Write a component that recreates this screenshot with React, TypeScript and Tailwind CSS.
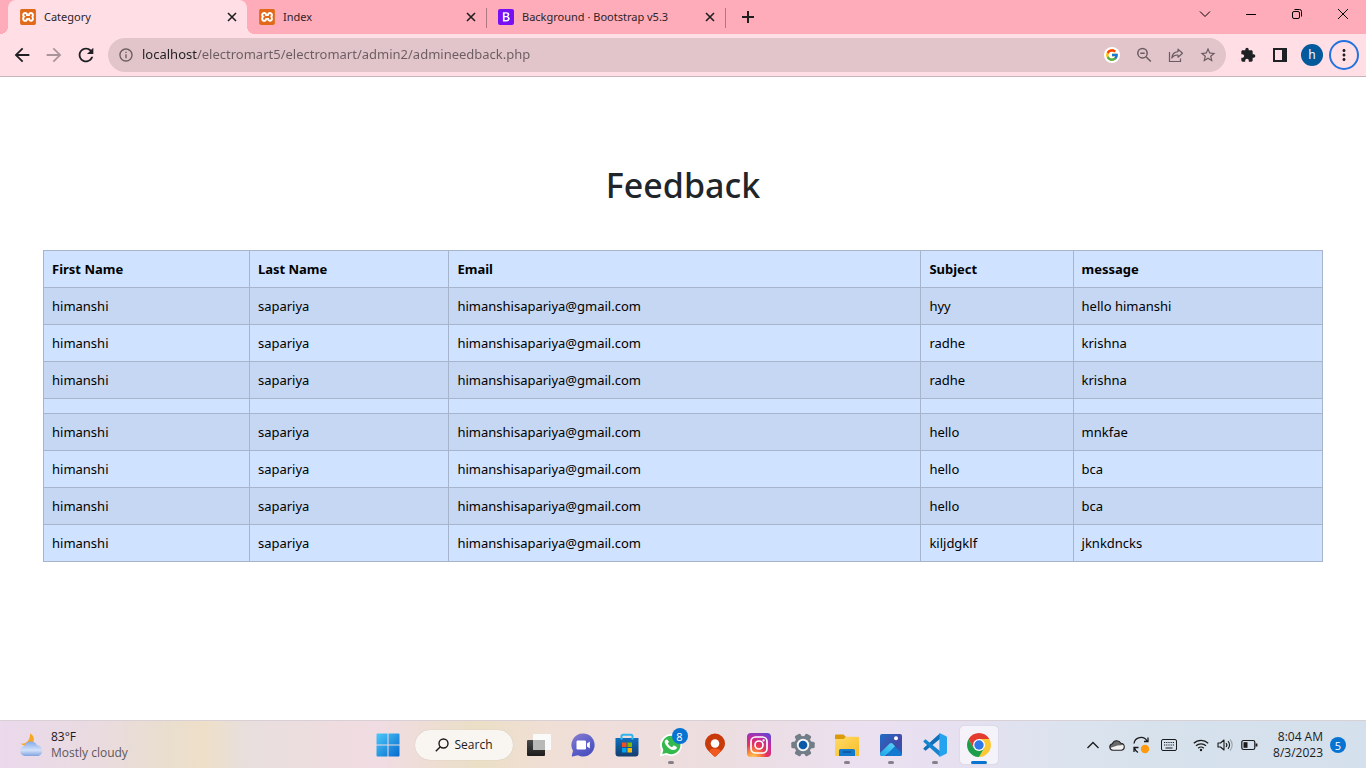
import type { ReactNode } from 'react'
import {
  MdArrowBack,
  MdArrowForward,
  MdExtension,
  MdInfoOutline,
  MdMoreVert,
  MdRefresh,
  MdStarBorder,
} from 'react-icons/md'
import { FcGoogle } from 'react-icons/fc'
import { SiXampp } from 'react-icons/si'

/* ---------- data ---------- */

type Row = [string, string, string, string, string]

const columns: Row = ['First Name', 'Last Name', 'Email', 'Subject', 'message']

const rows: Row[] = [
  ['himanshi', 'sapariya', 'himanshisapariya@gmail.com', 'hyy', 'hello himanshi'],
  ['himanshi', 'sapariya', 'himanshisapariya@gmail.com', 'radhe', 'krishna'],
  ['himanshi', 'sapariya', 'himanshisapariya@gmail.com', 'radhe', 'krishna'],
  ['', '', '', '', ''],
  ['himanshi', 'sapariya', 'himanshisapariya@gmail.com', 'hello', 'mnkfae'],
  ['himanshi', 'sapariya', 'himanshisapariya@gmail.com', 'hello', 'bca'],
  ['himanshi', 'sapariya', 'himanshisapariya@gmail.com', 'hello', 'bca'],
  ['himanshi', 'sapariya', 'himanshisapariya@gmail.com', 'kiljdgklf', 'jknkdncks'],
]

/* ---------- browser chrome ---------- */

function XamppIcon() {
  return (
    <span className="flex size-4 shrink-0 items-center justify-center rounded-[2px] bg-white">
      <SiXampp className="size-4 text-[#e2691a]" />
    </span>
  )
}

function BootstrapIcon() {
  return (
    <svg viewBox="0 0 16 16" className="size-4 shrink-0">
      <rect width="16" height="16" rx="2" fill="#7710f5" />
      <path
        d="M4.900 3.200h3.700c1.700 0 2.700.9 2.700 2.300 0 .9-.6 1.700-1.400 1.900 1.100.2 1.800 1 1.800 2.200 0 1.800-1.300 2.900-3.300 2.900H4.900zM6.600 7h1.500c.9 0 1.500-.4 1.500-1.200S9 4.600 8.200 4.600H6.600zM6.600 11.100h1.600c1 0 1.700-.5 1.700-1.400s-.7-1.400-1.800-1.400H6.600z"
        fill="#fff"
        fillRule="evenodd"
      />
    </svg>
  )
}

function Tab({ icon, title, active, divider }: { icon: ReactNode; title: string; active?: boolean; divider?: boolean }) {
  const tone = active ? 'rounded-t-lg bg-[#ffdfe5]' : ''
  return (
    <div className={`relative flex h-full w-[239px] items-center gap-2 pr-[7px] pl-3 ${tone}`}>
      {active && (
        <>
          <span className="absolute bottom-0 -left-2 size-2 bg-[radial-gradient(circle_at_0_0,transparent_8px,#ffdfe5_8px)]" />
          <span className="absolute -right-2 bottom-0 size-2 bg-[radial-gradient(circle_at_100%_0,transparent_8px,#ffdfe5_8px)]" />
        </>
      )}
      {icon}
      <button type="button" role="tab" aria-selected={!!active} className="min-w-0 flex-1 truncate text-left text-[11px] text-[#2c2427]">
        {title}
      </button>
      <button type="button" aria-label={`Close ${title}`} className="flex size-4 items-center justify-center text-[#1f1f1f]">
        <svg viewBox="0 0 10 10" className="size-2.5" fill="none" stroke="currentColor" strokeWidth="1.600">
          <path d="m1 1 8 8M9 1 1 9" />
        </svg>
      </button>
      {divider && <span className="absolute top-2 -right-px h-5 w-px bg-[#b07683]" />}
    </div>
  )
}

function TabStrip() {
  return (
    <header className="flex h-[34px] shrink-0 bg-[#ffacba] pl-2">
      <div role="tablist" className="flex">
        <Tab icon={<XamppIcon />} title="Category" active />
        <Tab icon={<XamppIcon />} title="Index" divider />
        <Tab icon={<BootstrapIcon />} title="Background · Bootstrap v5.3" divider />
      </div>
      <button type="button" aria-label="New tab" className="ml-[13px] flex w-5 items-center justify-center text-[#1f1f1f]">
        <svg viewBox="0 0 12 12" className="size-3" fill="none" stroke="currentColor" strokeWidth="2">
          <path d="M6 0v12M0 6h12" />
        </svg>
      </button>
      <div className="ml-auto flex h-7 text-black">
        <WindowButton label="Search tabs">
          <path d="M1 3.500 6 8.500 11 3.500" />
        </WindowButton>
        <WindowButton label="Minimize">
          <path d="M1 6.500h10" />
        </WindowButton>
        <WindowButton label="Restore">
          <rect x="1.500" y="3.500" width="7" height="7" rx="1.500" />
          <path d="M3.500 1.500h5a2 2 0 0 1 2 2v5" />
        </WindowButton>
        <WindowButton label="Close">
          <path d="m1 1 10 10M11 1 1 11" />
        </WindowButton>
      </div>
    </header>
  )
}

function WindowButton({ label, children }: { label: string; children: ReactNode }) {
  return (
    <button type="button" aria-label={label} className="flex w-[46px] items-center justify-center">
      <svg viewBox="0 0 12 12" className="size-3" fill="none" stroke="currentColor" strokeWidth="1">
        {children}
      </svg>
    </button>
  )
}

function IconButton({ label, className = '', children }: { label: string; className?: string; children: ReactNode }) {
  return (
    <button type="button" aria-label={label} className={`flex h-8 w-8 shrink-0 items-center justify-center ${className}`}>
      {children}
    </button>
  )
}

function Toolbar() {
  return (
    <nav className="flex h-[43px] shrink-0 items-center border-b border-[#c9b3b8] bg-[#ffdfe5] pr-1.5 pl-1.5 text-[#1f2023]">
      <IconButton label="Back">
        <MdArrowBack className="size-[22px]" />
      </IconButton>
      <IconButton label="Forward" className="text-[#a8959a]">
        <MdArrowForward className="size-[22px]" />
      </IconButton>
      <IconButton label="Reload">
        <MdRefresh className="size-[22px]" />
      </IconButton>

      <div className="ml-1.5 flex h-[34px] min-w-0 flex-1 items-center rounded-full bg-[#e1c5ca] pl-2 text-[#6a5c60]">
        <button type="button" aria-label="Site information" className="mr-2 ml-0.5">
          <MdInfoOutline className="size-4" />
        </button>
        <input
          aria-label="Address"
          defaultValue="localhost/electromart5/electromart/admin2/admineedback.php"
          className="min-w-0 flex-1 bg-[linear-gradient(90deg,#1f2023_55px,#6a5c60_55px)] bg-clip-text text-[13px] text-transparent outline-none"
        />
        <IconButton label="Search with Google">
          <span className="flex size-4 items-center justify-center rounded-full bg-white">
            <FcGoogle className="size-3.5" />
          </span>
        </IconButton>
        <IconButton label="Zoom">
          <svg viewBox="0 0 16 16" className="size-4" fill="none" stroke="currentColor" strokeWidth="1.500">
            <circle cx="6.500" cy="6.200" r="4.700" />
            <path d="m10 9.700 4.800 4.800M4.300 6.200h4.400" />
          </svg>
        </IconButton>
        <IconButton label="Share">
          <svg viewBox="0 0 16 16" className="size-4" fill="none" stroke="currentColor" strokeWidth="1.200">
            <path d="M1.500 5v9.500h11V11.500" />
            <path d="M10 2.200 14.500 6.200 10 10.200V8C7.200 7.800 5.300 8.700 3.800 11c.3-3.500 2.400-6 6.200-6.400z" strokeLinejoin="round" />
          </svg>
        </IconButton>
        <IconButton label="Bookmark">
          <MdStarBorder className="size-[18px]" />
        </IconButton>
        <span className="w-0.5" />
      </div>

      <IconButton label="Extensions" className="ml-1.5">
        <MdExtension className="size-4" />
      </IconButton>
      <IconButton label="Side panel">
        <svg viewBox="0 0 14 14" className="size-3.5">
          <path fill="currentColor" d="M0 0h14v14H0zM2 2v10h7V2z" fillRule="evenodd" />
        </svg>
      </IconButton>
      <IconButton label="Profile h">
        <span className="flex size-[22px] items-center justify-center rounded-full bg-[#02599c] text-xs text-white">h</span>
      </IconButton>
      <IconButton label="Menu">
        <span className="flex size-[30px] shrink-0 items-center justify-center rounded-full border-2 border-[#2472e0]">
          <MdMoreVert className="size-[18px]" />
        </span>
      </IconButton>
    </nav>
  )
}

/* ---------- page ---------- */

function FeedbackPage() {
  return (
    <main className="min-h-0 flex-1 overflow-hidden bg-white px-[43px] pt-[87px]">
      <h1 className="text-center text-[34px] leading-[43px] font-medium text-[#212529]">Feedback</h1>
      <table className="mt-[43px] w-full table-fixed border-collapse text-left text-[13px] text-black">
        <colgroup>
          <col className="w-[16.1%]" />
          <col className="w-[15.6%]" />
          <col className="w-[36.9%]" />
          <col className="w-[11.9%]" />
          <col className="w-[19.5%]" />
        </colgroup>
        <thead>
          <tr className="bg-[#cfe2ff]">
            {columns.map((name) => (
              <th key={name} scope="col" className="border border-[#a6b5cc] px-2 py-[7px] leading-[22px] font-bold">
                {name}
              </th>
            ))}
          </tr>
        </thead>
        <tbody>
          {rows.map((row, i) => (
            <tr key={i} className="odd:bg-[#c5d7f2] even:bg-[#cfe2ff]">
              {row.map((cell, j) => (
                <td key={j} className="border border-[#a6b5cc] px-2 py-[7px] leading-[22px]">
                  {cell}
                </td>
              ))}
            </tr>
          ))}
        </tbody>
      </table>
    </main>
  )
}

/* ---------- taskbar ---------- */

function TaskButton({ label, running, active, children }: { label: string; running?: boolean; active?: boolean; children: ReactNode }) {
  return (
    <button type="button" aria-label={label} className="relative flex h-12 w-11 items-center justify-center">
      {active && <span className="absolute inset-x-[3px] inset-y-[5px] rounded bg-white/60 shadow-[0_0_1px_rgba(0,0,0,0.25)]" />}
      <span className="relative">{children}</span>
      {running && <span className="absolute bottom-[5px] h-[3px] w-1.5 rounded-full bg-[#85808a]" />}
      {active && <span className="absolute bottom-[5px] h-[3px] w-4 rounded-full bg-[#0a74d1]" />}
    </button>
  )
}

function StartIcon() {
  return (
    <svg viewBox="0 0 24 24" className="size-6">
      <defs>
        <linearGradient id="win" x1="0" y1="0" x2="1" y2="1" gradientUnits="objectBoundingBox">
          <stop offset="0" stopColor="#4cc9fa" />
          <stop offset="1" stopColor="#0669cc" />
        </linearGradient>
      </defs>
      <path fill="url(#win)" d="M.5 1.500a1 1 0 0 1 1-1h10v11H.5zM12.500.5h10a1 1 0 0 1 1 1v10h-11zM.5 12.500h11v11h-10a1 1 0 0 1-1-1zM12.500 12.500h11v10a1 1 0 0 1-1 1h-10z" />
    </svg>
  )
}

function TaskViewIcon() {
  return (
    <svg viewBox="0 0 24 24" className="size-6">
      <defs>
        <linearGradient id="tvd" x1="0" y1="0" x2="0" y2="1">
          <stop offset="0" stopColor="#4a4a4a" />
          <stop offset="1" stopColor="#1c1c1c" />
        </linearGradient>
      </defs>
      <rect x="0" y="7" width="18" height="16" rx="1" fill="url(#tvd)" />
      <rect x="6" y="1" width="18" height="16" rx="1" fill="#fafafa" />
      <path d="M6 7h12v10H7a1 1 0 0 1-1-1z" fill="#b9b9b7" />
    </svg>
  )
}

function ChatIcon() {
  return (
    <svg viewBox="0 0 24 24" className="size-6">
      <defs>
        <linearGradient id="chat" x1="0" y1="0" x2=".6" y2="1">
          <stop offset="0" stopColor="#8b7fd0" />
          <stop offset=".5" stopColor="#6365ca" />
          <stop offset="1" stopColor="#4b4fc0" />
        </linearGradient>
      </defs>
      <path d="M12 .5A11.500 11.500 0 1 1 7 22.300L1.600 23.500c-.6.1-1-.4-.8-.9L2 17.800A11.500 11.500 0 0 1 12 .5z" fill="url(#chat)" />
      <rect x="5.500" y="7.500" width="9.500" height="9" rx="1.200" fill="#fff" />
      <path d="m16 10.500 2.800-2v7l-2.800-2z" fill="#fff" />
    </svg>
  )
}

function StoreIcon() {
  return (
    <svg viewBox="0 0 24 24" className="size-6">
      <defs>
        <linearGradient id="store" x1="0" y1="0" x2="0" y2="1">
          <stop offset="0" stopColor="#0f6fc0" />
          <stop offset="1" stopColor="#153e6e" />
        </linearGradient>
      </defs>
      <path d="M6.500 6V3.200a1.500 1.500 0 0 1 1.500-1.500h8a1.500 1.500 0 0 1 1.500 1.500V6" fill="none" stroke="#2fb4ee" strokeWidth="2" />
      <path d="M.5 5h23v15.500a3 3 0 0 1-3 3h-17a3 3 0 0 1-3-3z" fill="url(#store)" />
      <path d="M6.500 5v1.500M17.500 5v1.500" stroke="#35c1f1" strokeWidth="2" />
      <rect x="7" y="9.500" width="4.500" height="4.500" fill="#f25022" />
      <rect x="12.500" y="9.500" width="4.500" height="4.500" fill="#7fba00" />
      <rect x="7" y="15" width="4.500" height="4.500" fill="#00a4ef" />
      <rect x="12.500" y="15" width="4.500" height="4.500" fill="#ffb900" />
    </svg>
  )
}

function WhatsAppIcon() {
  return (
    <svg viewBox="0 0 24 24" className="size-6">
      <path d="M12.200 1A11 11 0 1 1 7 21.800L.6 23.500l1.800-6.200A11 11 0 0 1 12.200 1z" fill="#fff" />
      <path d="M12.200 2.800a9.200 9.200 0 1 1-4.700 17.100l-4.300 1.200 1.200-4.200A9.200 9.200 0 0 1 12.200 2.800z" fill="#33b94c" />
      <path
        d="M8.700 7.200c-.3-.6-.7-.6-1.100-.6-1 0-1.900 1-1.900 2.500 0 1.400 1 2.800 2.400 4.300 2 2.200 4.600 3.700 6.800 3.700 1.500 0 3-1.100 3-2.500 0-.6-.1-.7-.5-.9l-2.300-1.100c-.4-.2-.7-.1-.9.2l-.9 1.100c-.2.300-.5.300-.8.100-1.400-.6-2.800-1.900-3.500-3.200-.2-.3-.1-.5.1-.7l.7-.9c.2-.3.1-.5 0-.7z"
        fill="#fff"
      />
    </svg>
  )
}

function PinIcon() {
  return (
    <svg viewBox="0 0 24 24" className="size-6">
      <path d="M12 .5a10 10 0 0 1 10 10c0 5.500-5.500 9-8.800 12.500a1.700 1.700 0 0 1-2.400 0C7.500 19.500 2 16 2 10.500a10 10 0 0 1 10-10z" fill="#c93a0a" />
      <path d="M12 15.500c3 0 5 .8 5.900 2.500-1.500 1.800-3.300 3.400-4.700 5a1.700 1.700 0 0 1-2.400 0c-1.400-1.600-3.200-3.200-4.700-5 .9-1.700 2.900-2.500 5.900-2.500z" fill="#f0591f" />
      <circle cx="12" cy="10.500" r="4.300" fill="#fff" />
    </svg>
  )
}

function InstagramIcon() {
  return (
    <svg viewBox="0 0 24 24" className="size-6">
      <defs>
        <radialGradient id="insta" cx=".25" cy="1.050" r="1.150">
          <stop offset="0" stopColor="#fdd55f" />
          <stop offset=".25" stopColor="#fb8b3c" />
          <stop offset=".5" stopColor="#e6355a" />
          <stop offset=".75" stopColor="#c42b9c" />
          <stop offset="1" stopColor="#6a43d0" />
        </radialGradient>
      </defs>
      <rect width="24" height="24" rx="4" fill="url(#insta)" />
      <g fill="none" stroke="#fff" strokeWidth="1.700">
        <rect x="4" y="4" width="16" height="16" rx="4.500" />
        <circle cx="12" cy="12" r="4" />
      </g>
      <circle cx="16.600" cy="7.400" r="1.100" fill="#fff" />
    </svg>
  )
}

function SettingsIcon() {
  return (
    <svg viewBox="0 0 24 24" className="size-6">
      <g fill="#727d87">
        <circle cx="12" cy="12" r="9" />
        {[30, 90, 150].map((angle) => (
          <rect key={angle} x="8.700" y="0.300" width="6.600" height="23.400" rx="1.500" transform={`rotate(${angle} 12 12)`} />
        ))}
      </g>
      <circle cx="12" cy="12" r="6.200" fill="#f3f5f7" />
      <circle cx="12" cy="12" r="4.300" fill="#0a58a8" />
    </svg>
  )
}

function ExplorerIcon() {
  return (
    <svg viewBox="0 0 24 24" className="size-6">
      <defs>
        <linearGradient id="folder" x1="0" y1="0" x2="1" y2="1">
          <stop offset="0" stopColor="#ffdb68" />
          <stop offset="1" stopColor="#f9bd27" />
        </linearGradient>
      </defs>
      <path d="M0 2.500a1 1 0 0 1 1-1h7.500L11 4v3H0z" fill="#d99a0c" />
      <path d="M0 6h8.500L11 3.800h12a1 1 0 0 1 1 1V22a1 1 0 0 1-1 1H1a1 1 0 0 1-1-1z" fill="url(#folder)" />
      <path d="M4 23v-5.500a1.500 1.500 0 0 1 1.500-1.500h13a1.500 1.500 0 0 1 1.500 1.500V23z" fill="#1379cc" />
      <path d="M8 19h8" stroke="#0b4c90" strokeWidth="1.200" />
    </svg>
  )
}

function PhotosIcon() {
  return (
    <svg viewBox="0 0 24 24" className="size-6">
      <defs>
        <linearGradient id="photo" x1="0" y1="0" x2="1" y2="1">
          <stop offset="0" stopColor="#1c6fc6" />
          <stop offset=".6" stopColor="#4548a8" />
          <stop offset="1" stopColor="#1b62ba" />
        </linearGradient>
        <linearGradient id="hill" x1="0" y1="1" x2="1" y2="0">
          <stop offset="0" stopColor="#1aa0e4" />
          <stop offset="1" stopColor="#55d4f5" />
        </linearGradient>
        <clipPath id="photoclip">
          <rect x="1" y="1" width="22" height="22" rx="2" />
        </clipPath>
      </defs>
      <g clipPath="url(#photoclip)">
        <rect x="1" y="1" width="22" height="22" fill="url(#photo)" />
        <path d="M10.500 11a2 2 0 0 1 3 0L24 21.500V24H8z" fill="#1479d0" />
        <path d="M0 21 10.700 10.600a2 2 0 0 1 2.800 0l2.500 2.600L5 24H0z" fill="url(#hill)" />
      </g>
      <circle cx="17" cy="5.300" r="2" fill="#fff" />
    </svg>
  )
}

function CodeIcon() {
  return (
    <svg viewBox="0 0 24 24" className="size-6">
      <path d="M17.500 5.500 2.500 17.700.7 16.200a.8.800 0 0 1 0-1.200L17 .3z" fill="#0f6fb8" />
      <path d="M17.500 18.500 2.500 6.300.7 7.800a.8.800 0 0 0 0 1.200L17 23.700z" fill="#1484cf" />
      <path d="M17 .3 22.800 3c.7.300 1.200 1 1.200 1.700v14.600c0 .8-.5 1.400-1.200 1.700L17 23.700c-.3.100-.6-.1-.6-.5V.800c0-.4.300-.6.6-.5z" fill="#26a3ee" />
    </svg>
  )
}

function ChromeIcon() {
  return (
    <svg viewBox="0 0 24 24" className="size-6">
      <path d="M12 6h10.390A12 12 0 0 1 12 24l5.200-9z" fill="#fcc934" />
      <path d="M6.800 15 1.610 6A12 12 0 0 0 12 24l5.200-9z" fill="#1e9e4a" />
      <path d="M1.610 6 6.800 15 12 6h10.390A12 12 0 0 0 1.610 6z" fill="#e33b2e" />
      <circle cx="12" cy="12" r="6" fill="#fff" />
      <circle cx="12" cy="12" r="4.700" fill="#2f78ea" />
    </svg>
  )
}

function WeatherIcon() {
  return (
    <svg viewBox="0 0 24 24" className="size-6 shrink-0">
      <defs>
        <linearGradient id="cloud" x1="0" y1="0" x2="0" y2="1">
          <stop offset="0" stopColor="#83a9ea" />
          <stop offset=".6" stopColor="#d3e2fa" />
          <stop offset="1" stopColor="#7fa3e0" />
        </linearGradient>
      </defs>
      <path d="M10 .5c3.500 1.500 5 5.500 3 9-2.500 4-8.500 4.500-12.500 1C6 11.500 10.500 7 10 .5z" fill="#f6a723" />
      <path d="M5 23a5 5 0 0 1-.6-9.900A6.500 6.500 0 0 1 10.500 8.500a7 7 0 0 1 6.600 3.700A5.600 5.600 0 0 1 18.500 23z" fill="url(#cloud)" />
    </svg>
  )
}

function TrayIcons() {
  return (
    <>
      <button type="button" aria-label="Show hidden icons" className="flex w-6 justify-center">
        <svg viewBox="0 0 14 14" className="size-3.5" fill="none" stroke="currentColor" strokeWidth="1.300">
          <path d="M1.500 10 7 4.500l5.500 5.500" />
        </svg>
      </button>
      <button type="button" aria-label="OneDrive" className="flex w-6 justify-center">
        <svg viewBox="0 0 16 12" className="h-3 w-4">
          <path d="M3.800 11.300a3.300 3.300 0 0 1-.4-6.500 4.600 4.600 0 0 1 8.400-.6 3.600 3.600 0 0 1 .7 7.100z" fill="#f3f3f3" />
          <path d="M1 9a3.300 3.300 0 0 1 2.400-4.200 4.600 4.600 0 0 1 8.400-.6L15 6 8.500 6.500z" fill="#6a6a6a" />
          <path d="M3.800 11.300a3.300 3.300 0 0 1-.4-6.500 4.600 4.600 0 0 1 8.400-.6 3.600 3.600 0 0 1 .7 7.100z" fill="none" stroke="#222" strokeWidth="1.100" />
        </svg>
      </button>
      <button type="button" aria-label="Updates" className="flex w-6 justify-center">
        <svg viewBox="0 0 18 18" className="size-[18px]" fill="none" stroke="currentColor" strokeWidth="1.300">
          <path d="M2 7.500A7 7 0 0 1 15 5M16 1.500v4h-4M6 16.500A7 7 0 0 1 2.500 12M6.500 11.500h-4.500v4.500" />
          <circle cx="13" cy="13" r="4.200" fill="#ff9a0c" stroke="none" />
        </svg>
      </button>
      <button type="button" aria-label="Touch keyboard" className="flex w-8 justify-center">
        <svg viewBox="0 0 16 12" className="h-3 w-4" fill="none" stroke="currentColor">
          <rect x=".5" y=".5" width="15" height="11" rx="1.500" />
          <path d="M3 3.500h10M3 6h10" strokeDasharray="1.200 1" strokeWidth="1.200" />
          <path d="M4.500 9h7" />
        </svg>
      </button>
      <button type="button" aria-label="Network, sound and battery" className="ml-2 flex items-center gap-2">
        <svg viewBox="0 0 16 14" className="h-3.5 w-4" fill="none" stroke="currentColor" strokeWidth="1.200">
          <path d="M.8 5.300a10.300 10.300 0 0 1 14.400 0M3 7.800a7.200 7.200 0 0 1 10 0M5.200 10.200a4 4 0 0 1 5.600 0" />
          <circle cx="8" cy="12" r="1.200" fill="currentColor" stroke="none" />
        </svg>
        <svg viewBox="0 0 16 14" className="h-3.5 w-4" fill="none" stroke="currentColor" strokeWidth="1.100">
          <path d="M1 5h2.500L7 2v10L3.500 9H1z" strokeLinejoin="round" />
          <path d="M9 5a3 3 0 0 1 0 4M11 3.200a5.500 5.500 0 0 1 0 7.600" />
          <path d="M13 1.500a8 8 0 0 1 0 11" opacity=".3" />
        </svg>
        <svg viewBox="0 0 17 12" className="h-3 w-[17px]" fill="none" stroke="currentColor" strokeWidth="1.200">
          <rect x=".8" y="1.500" width="13" height="9" rx="1.800" />
          <rect x="2.500" y="3.200" width="4" height="5.600" fill="currentColor" stroke="none" />
          <path d="M15.500 4.500v3" strokeWidth="1.800" />
        </svg>
      </button>
    </>
  )
}

function Taskbar() {
  return (
    <footer className="grid h-12 shrink-0 grid-cols-[1fr_auto_1fr] items-center border-t border-[#d9d0d6] bg-[linear-gradient(90deg,#ebd9ec_0%,#e9dbe0_7%,#e9decf_12%,#eedfc8_15%,#e8dfdd_18%,#efdce0_25%,#f0dce2_28%,#ebdfc6_35%,#efdfd3_39%,#efdeda_44%,#ecdde0_53%,#ebe0f0_63%,#e6e0f0_70%,#dbe3ee_78%,#d5e1ec_88%,#d5e0ed_100%)] font-['Open_Sans','Noto_Sans',sans-serif] text-[#1b1b1b]">
      <button type="button" className="flex items-center gap-[7px] justify-self-start pl-5 text-left text-xs">
        <WeatherIcon />
        <span className="leading-4">
          <span className="block">83°F</span>
          <span className="block text-[#5d575c]">Mostly cloudy</span>
        </span>
      </button>

      <div className="flex items-center">
        <TaskButton label="Start">
          <StartIcon />
        </TaskButton>
        <button type="button" className="mr-1 ml-[5px] flex h-[30px] w-[98px] items-center justify-center gap-1.5 rounded-full bg-[#f9f5f0] text-xs shadow-[0_0_1px_rgba(0,0,0,0.2)]">
          <svg viewBox="0 0 14 14" className="size-3.5" fill="none" stroke="currentColor" strokeWidth="1.400">
            <circle cx="8.500" cy="5.500" r="4.500" />
            <path d="M5.300 8.700.8 13.200" />
          </svg>
          Search
        </button>
        <TaskButton label="Task view">
          <TaskViewIcon />
        </TaskButton>
        <TaskButton label="Chat">
          <ChatIcon />
        </TaskButton>
        <TaskButton label="Microsoft Store">
          <StoreIcon />
        </TaskButton>
        <TaskButton label="WhatsApp" running>
          <WhatsAppIcon />
          <span className="absolute -top-[5px] -right-[5px] flex size-4 items-center justify-center rounded-full bg-[#0874d2] text-[11px] leading-none text-white">8</span>
        </TaskButton>
        <TaskButton label="Maps">
          <PinIcon />
        </TaskButton>
        <TaskButton label="Instagram">
          <InstagramIcon />
        </TaskButton>
        <TaskButton label="Settings">
          <SettingsIcon />
        </TaskButton>
        <TaskButton label="File Explorer" running>
          <ExplorerIcon />
        </TaskButton>
        <TaskButton label="Photos" running>
          <PhotosIcon />
        </TaskButton>
        <TaskButton label="Visual Studio Code" running>
          <CodeIcon />
        </TaskButton>
        <TaskButton label="Google Chrome" active>
          <ChromeIcon />
        </TaskButton>
      </div>

      <div className="flex items-center justify-self-end pr-5">
        <TrayIcons />
        <button type="button" aria-label="Clock and notifications" className="ml-[15px] flex items-center gap-[7px] text-right text-xs">
          <span className="leading-4">
            <span className="block">8:04 AM</span>
            <span className="block">8/3/2023</span>
          </span>
          <span className="flex size-4 items-center justify-center rounded-full bg-[#0874d2] text-[11px] leading-none text-white">5</span>
        </button>
      </div>
    </footer>
  )
}

export default function App() {
  return (
    <div className="flex h-screen flex-col overflow-hidden bg-white font-['Noto_Sans',sans-serif]">
      <TabStrip />
      <Toolbar />
      <FeedbackPage />
      <Taskbar />
    </div>
  )
}
